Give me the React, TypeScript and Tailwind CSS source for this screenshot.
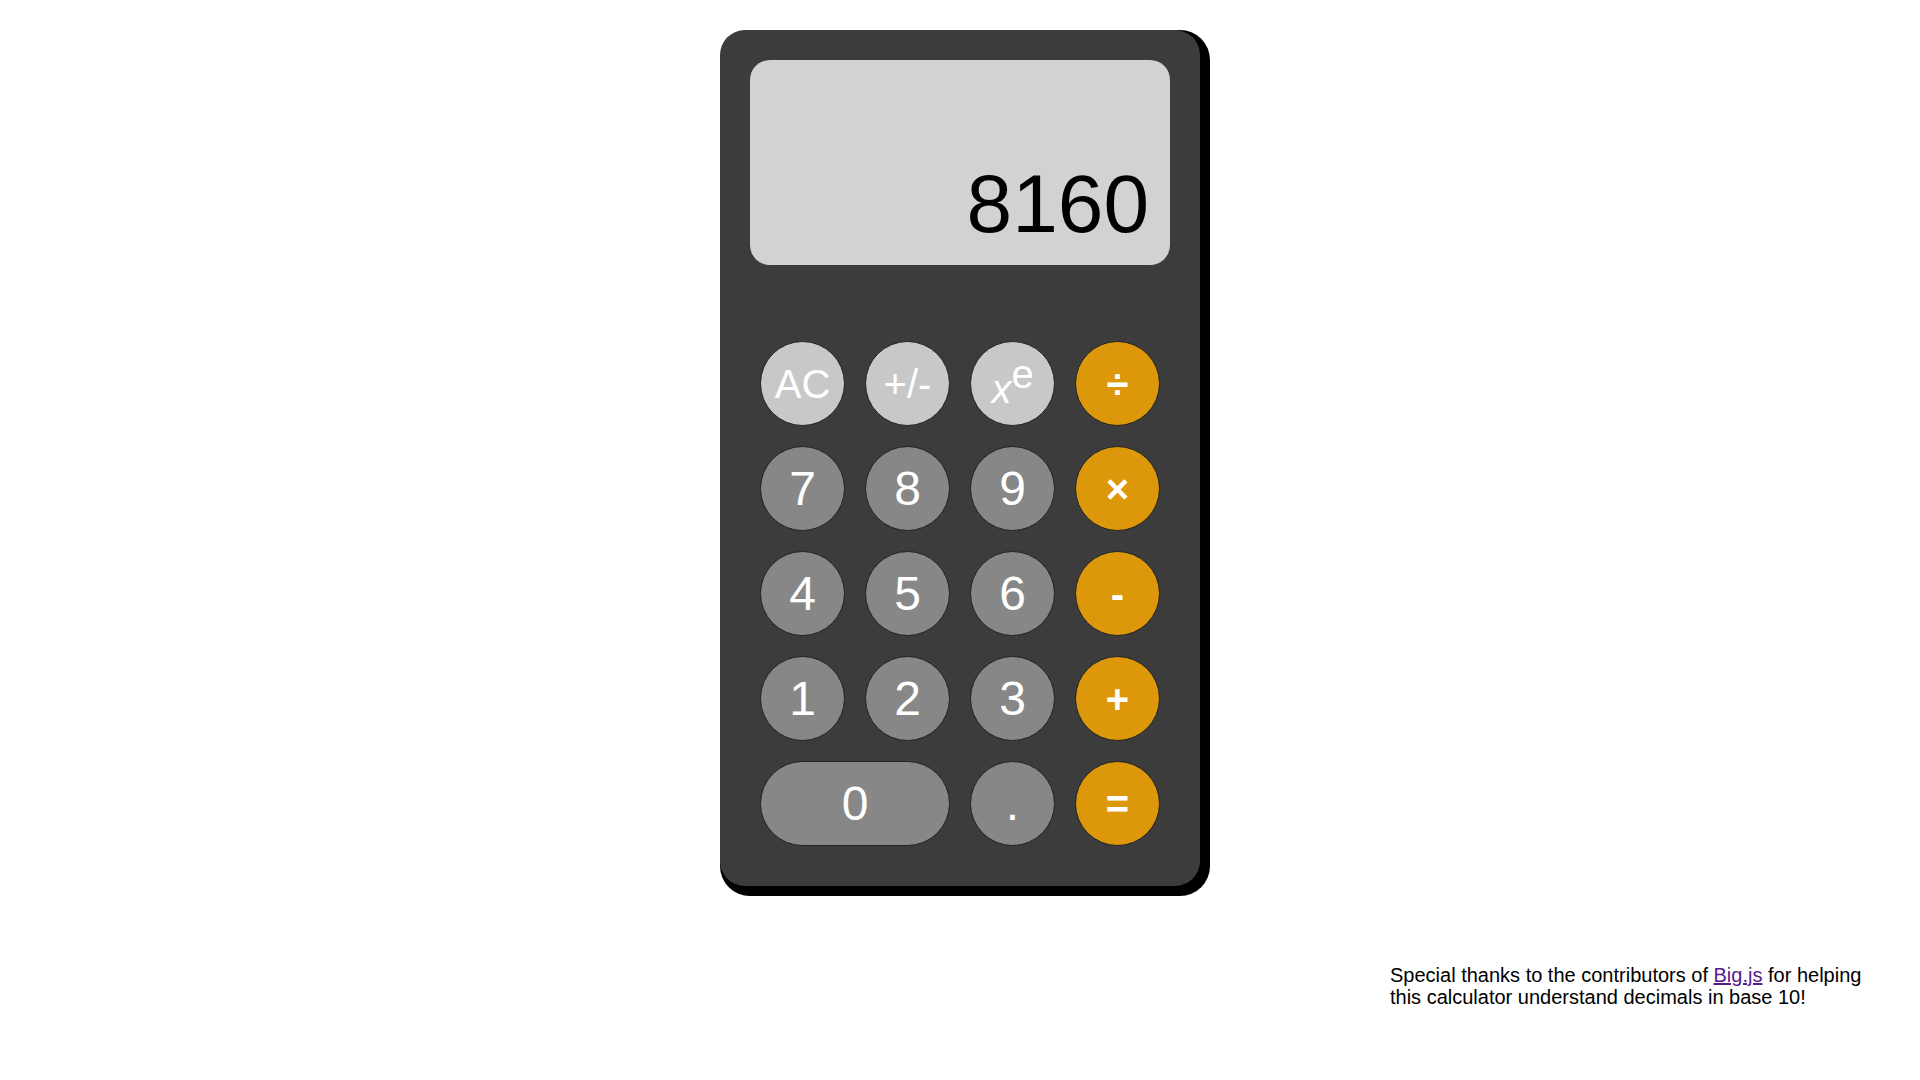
const keyBase =
  'flex h-[85px] items-center justify-center rounded-full border border-[#222] text-white';

type Key = { label: React.ReactNode; kind: 'fn' | 'num' | 'op'; wide?: boolean };

const keys: Key[] = [
  { label: 'AC', kind: 'fn' },
  { label: '+/-', kind: 'fn' },
  {
    label: (
      <span className="relative top-[5px]">
        <i>x</i>
        <span className="relative -top-[15px]">e</span>
      </span>
    ),
    kind: 'fn',
  },
  { label: '÷', kind: 'op' },
  { label: '7', kind: 'num' },
  { label: '8', kind: 'num' },
  { label: '9', kind: 'num' },
  { label: '×', kind: 'op' },
  { label: '4', kind: 'num' },
  { label: '5', kind: 'num' },
  { label: '6', kind: 'num' },
  { label: '-', kind: 'op' },
  { label: '1', kind: 'num' },
  { label: '2', kind: 'num' },
  { label: '3', kind: 'num' },
  { label: '+', kind: 'op' },
  { label: '0', kind: 'num', wide: true },
  { label: '.', kind: 'num' },
  { label: '=', kind: 'op' },
];

const kindClass = {
  fn: 'bg-[#c8c8c8] text-[40px]',
  num: 'bg-[#878787] text-[48px]',
  op: 'bg-[#dd970a] text-[40px] font-bold',
};

export default function App() {
  return (
    <div className="min-h-[1080px] bg-white font-['Liberation_Sans',Arial,sans-serif]">
      <div className="mx-auto mt-[30px] w-[480px] rounded-[25px] bg-[#3c3c3c] px-[30px] pb-[40px] pt-[30px] shadow-[5px_5px_0_5px_#000]">
        <div className="flex h-[205px] items-end justify-end rounded-[20px] bg-[#d2d2d2] pb-[20px] pr-[21px]">
          <span className="text-[82px] leading-none text-black">8160</span>
        </div>

        <div className="mt-[76px] grid grid-cols-[repeat(4,85px)] gap-[20px] px-[10px]">
          {keys.map((k, i) => (
            <button
              key={i}
              className={`${keyBase} ${kindClass[k.kind]} ${k.wide ? 'col-span-2' : ''}`}
            >
              {k.label}
            </button>
          ))}
        </div>
      </div>

      <div className="ml-auto mr-[50px] mt-[78px] w-[480px] text-[20px] leading-[22px] text-black">
        Special thanks to the contributors of{' '}
        <a href="#" className="text-[#551a8b] underline">
          Big.js
        </a>{' '}
        for helping this calculator understand decimals in base 10!
      </div>
    </div>
  );
}
